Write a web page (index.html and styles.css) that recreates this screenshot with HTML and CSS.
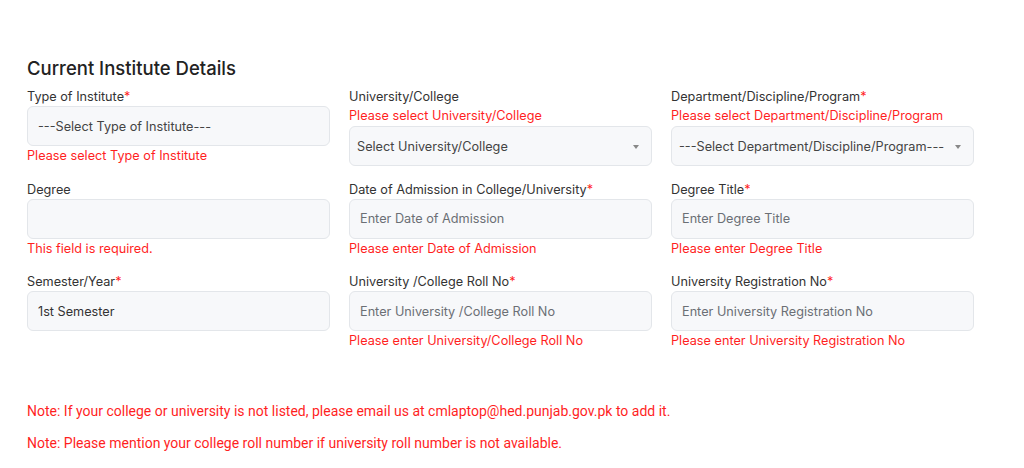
FILE: index.html
```html
<!DOCTYPE html>
<html lang="en">
<head>
    <meta charset="UTF-8">
    <meta name="viewport" content="width=device-width, initial-scale=1.0">
    <title>Current Institute Details</title>
    <link rel="stylesheet" href="styles.css">
</head>
<body>
    <div class="section">
        <h2 class="section-title">Current Institute Details</h2>
        <div class="form-grid">
            <div class="field">
                <label>Type of Institute<span class="req">*</span></label>
                <div class="control">---Select Type of Institute---</div>
                <div class="error">Please select Type of Institute</div>
            </div>
            <div class="field">
                <label>University/College</label>
                <div class="error">Please select University/College</div>
                <div class="control select">Select University/College<span class="caret"></span></div>
            </div>
            <div class="field">
                <label>Department/Discipline/Program<span class="req">*</span></label>
                <div class="error">Please select Department/Discipline/Program</div>
                <div class="control select">---Select Department/Discipline/Program---<span class="caret"></span></div>
            </div>

            <div class="field">
                <label>Degree</label>
                <div class="control"></div>
                <div class="error">This field is required.</div>
            </div>
            <div class="field">
                <label>Date of Admission in College/University<span class="req">*</span></label>
                <div class="control placeholder">Enter Date of Admission</div>
                <div class="error">Please enter Date of Admission</div>
            </div>
            <div class="field">
                <label>Degree Title<span class="req">*</span></label>
                <div class="control placeholder">Enter Degree Title</div>
                <div class="error">Please enter Degree Title</div>
            </div>

            <div class="field">
                <label>Semester/Year<span class="req">*</span></label>
                <div class="control value">1st Semester</div>
            </div>
            <div class="field">
                <label>University /College Roll No<span class="req">*</span></label>
                <div class="control placeholder">Enter University /College Roll No</div>
                <div class="error">Please enter University/College Roll No</div>
            </div>
            <div class="field">
                <label>University Registration No<span class="req">*</span></label>
                <div class="control placeholder">Enter University Registration No</div>
                <div class="error">Please enter University Registration No</div>
            </div>
        </div>

        <div class="notes">
            <p>Note: If your college or university is not listed, please email us at cmlaptop@hed.punjab.gov.pk to add it.</p>
            <p>Note: Please mention your college roll number if university roll number is not available.</p>
        </div>
    </div>
</body>
</html>
```

FILE: styles.css
```css
body {
    margin: 0;
    font-family: Inter, "Noto Sans", sans-serif;
    background: #ffffff;
    color: #333333;
}
.section {
    width: 948px;
    padding: 56px 0 0 27px;
}
.section-title {
    margin: 0 0 8px 0;
    font-size: 18.5px;
    line-height: 24px;
    font-weight: 500;
    color: #222222;
}
.form-grid {
    display: grid;
    grid-template-columns: repeat(3, 303px);
    column-gap: 19px;
    row-gap: 14.5px;
    align-items: start;
}
.field {
    display: flex;
    flex-direction: column;
}
.field label {
    font-size: 12.7px;
    line-height: 18px;
    color: #333333;
}
.req {
    color: #ff1f1f;
}
.control {
    box-sizing: border-box;
    height: 40px;
    border: 1px solid #e3e6ea;
    border-radius: 6px;
    background: #f7f8fa;
    padding: 0 10px;
    display: flex;
    align-items: center;
    font-size: 12.7px;
    color: #444444;
    position: relative;
}
.control.placeholder {
    color: #6b6f75;
}
.control.value {
    color: #333333;
}
.control.select {
    padding-left: 7px;
}
.caret {
    position: absolute;
    right: 12px;
    top: 18px;
    width: 0;
    height: 0;
    border-left: 3.5px solid transparent;
    border-right: 3.5px solid transparent;
    border-top: 4px solid #888888;
}
.error {
    font-size: 12.7px;
    line-height: 20px;
    color: #ff1f1f;
}
.notes {
    margin-top: 51px;
}
.notes p {
    margin: 0 0 14px 0;
    font-family: Roboto, "Liberation Sans", sans-serif;
    font-size: 14px;
    line-height: 18px;
    color: #ff1f1f;
}
```
